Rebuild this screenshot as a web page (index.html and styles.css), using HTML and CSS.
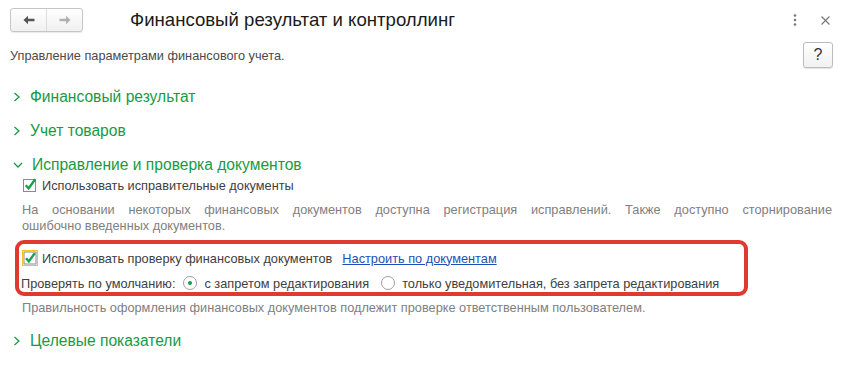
FILE: index.html
```html
<!DOCTYPE html>
<html lang="ru">
<head>
    <meta charset="UTF-8">
    <title>Финансовый результат и контроллинг</title>
    <link rel="stylesheet" href="styles.css">
</head>
<body>

    <div class="header">
        <div class="nav">
            <span class="nav-btn">
                <svg width="12" height="10" viewBox="0 0 12 10"><path d="M0.5 5 L5 0.8 L5 3.8 L11.5 3.8 L11.5 6.2 L5 6.2 L5 9.2 Z" fill="#555"/></svg>
            </span>
            <span class="nav-btn">
                <svg width="12" height="10" viewBox="0 0 12 10"><path d="M11.5 5 L7 0.8 L7 3.8 L0.5 3.8 L0.5 6.2 L7 6.2 L7 9.2 Z" fill="#b0b0b0"/></svg>
            </span>
        </div>
        <div class="title">Финансовый результат и контроллинг</div>
        <div class="header-tools">
            <svg class="tool-more" width="4" height="12" viewBox="0 0 4 12"><circle cx="2" cy="1.5" r="1.3" fill="#777"/><circle cx="2" cy="6" r="1.3" fill="#777"/><circle cx="2" cy="10.5" r="1.3" fill="#777"/></svg>
            <svg class="tool-close" width="9" height="9" viewBox="0 0 9 9"><path d="M0.5 0.5 L8.5 8.5 M8.5 0.5 L0.5 8.5" stroke="#777" stroke-width="1.1"/></svg>
        </div>
    </div>

    <div class="subhead">
        <span class="subtitle">Управление параметрами финансового учета.</span>
        <span class="help-btn">?</span>
    </div>

    <div class="group">
        <div class="group-head">
            <svg class="chevron" width="8" height="10" viewBox="0 0 8 10"><path d="M1.5 1 L6 5 L1.5 9" fill="none" stroke="#169b45" stroke-width="1.3"/></svg>
            Финансовый результат
        </div>
    </div>

    <div class="group">
        <div class="group-head">
            <svg class="chevron" width="8" height="10" viewBox="0 0 8 10"><path d="M1.5 1 L6 5 L1.5 9" fill="none" stroke="#169b45" stroke-width="1.3"/></svg>
            Учет товаров
        </div>
    </div>

    <div class="group">
        <div class="group-head">
            <svg class="chevron" width="10" height="10" viewBox="0 0 10 10"><path d="M1 3 L5 7 L9 3" fill="none" stroke="#169b45" stroke-width="1.3"/></svg>
            Исправление и проверка документов
        </div>
        <div class="group-body">
            <div class="row">
                <svg class="check" width="16" height="16" viewBox="0 0 16 16"><rect x="1.5" y="2.5" width="12" height="12" fill="#fff" stroke="#8a8a8a"/><path d="M3.8 8.3 L6.6 11.4 L13.2 2.2" fill="none" stroke="#19a04b" stroke-width="2.4"/></svg>
                <span class="label">Использовать исправительные документы</span>
            </div>
            <p class="note">
                <span class="note-line">На основании некоторых финансовых документов доступна регистрация исправлений. Также доступно сторнирование</span>
                ошибочно введенных документов.
            </p>

            <div class="highlight">
                <div class="row">
                    <svg class="check focused" width="16" height="16" viewBox="0 0 16 16"><rect x="0.5" y="0.5" width="15" height="15" fill="none" stroke="#f2c61f"/><rect x="2" y="2" width="12" height="12" fill="#fff" stroke="#8a8a8a"/><path d="M4 8.3 L6.8 11.4 L12.8 3.2" fill="none" stroke="#19a04b" stroke-width="2.4"/></svg>
                    <span class="label">Использовать проверку финансовых документов</span>
                    <a class="link" href="#">Настроить по документам</a>
                </div>
                <div class="row radio-row">
                    <span class="label">Проверять по умолчанию:</span>
                    <span class="radio checked"></span>
                    <span class="label option">с запретом редактирования</span>
                    <span class="radio"></span>
                    <span class="label option">только уведомительная, без запрета редактирования</span>
                </div>
            </div>

            <p class="note">Правильность оформления финансовых документов подлежит проверке ответственным пользователем.</p>
        </div>
    </div>

    <div class="group">
        <div class="group-head">
            <svg class="chevron" width="8" height="10" viewBox="0 0 8 10"><path d="M1.5 1 L6 5 L1.5 9" fill="none" stroke="#169b45" stroke-width="1.3"/></svg>
            Целевые показатели
        </div>
    </div>

</body>
</html>
```

FILE: styles.css
```css
body {
    margin: 0;
    font-family: "Liberation Sans", Arial, sans-serif;
    font-size: 12.75px;
    color: #404040;
    background: #fff;
}
.header {
    display: flex;
    align-items: center;
    height: 40px;
    padding-left: 10px;
}
.nav {
    display: flex;
    width: 73px;
    height: 24px;
    box-sizing: border-box;
    border: 1px solid #c6c6c6;
    border-radius: 3px;
    background: linear-gradient(#ffffff, #f0f0f0);
    box-shadow: 0 1px 1px rgba(0, 0, 0, 0.08);
}
.nav-btn {
    flex: 1;
    display: flex;
    align-items: center;
    justify-content: center;
}
.nav-btn + .nav-btn {
    border-left: 1px solid #dcdcdc;
}
.title {
    margin-left: 47px;
    font-size: 18.6px;
    color: #1a1a1a;
}
.header-tools {
    margin-left: auto;
    display: flex;
    align-items: center;
    padding-right: 20px;
}
.tool-close {
    margin-left: 24px;
}
.subhead {
    display: flex;
    align-items: center;
    justify-content: space-between;
    height: 30px;
    margin-bottom: 15px;
    padding: 0 17px 0 10px;
}
.subtitle {
    color: #4a4a4a;
}
.help-btn {
    width: 30px;
    height: 26px;
    box-sizing: border-box;
    border: 1px solid #bdbdbd;
    border-radius: 3px;
    background: linear-gradient(#ffffff, #f1f1f1);
    box-shadow: 0 1px 1px rgba(0, 0, 0, 0.12);
    display: flex;
    align-items: center;
    justify-content: center;
    font-size: 16px;
    color: #333;
}
.group-head {
    display: flex;
    align-items: center;
    height: 24px;
    margin-top: 10px;
    padding-left: 13px;
    font-size: 15.6px;
    color: #169b45;
}
.group-head .chevron {
    margin-right: 9px;
}
.group-body {
    padding-left: 22px;
    margin-top: -1px;
}
.row {
    display: flex;
    align-items: center;
    height: 18px;
    white-space: nowrap;
}
.check {
    margin-right: 4px;
    flex: none;
}
.note {
    margin: 8px 0 0;
    line-height: 16px;
    color: #808080;
    padding-right: 10px;
}
.note-line {
    display: block;
    width: 810px;
    text-align: justify;
    text-align-last: justify;
}
.highlight {
    width: 733px;
    box-sizing: border-box;
    margin: 6px 0 0 -7px;
    padding: 5px 0 0 3px;
    height: 56px;
    border: 4px solid #e0392f;
    border-radius: 9px;
}
.link {
    margin-left: 10px;
    color: #1f4fb5;
}
.radio-row {
    margin-top: 7px;
    margin-left: -1px;
}
.radio {
    width: 14px;
    height: 14px;
    box-sizing: border-box;
    border: 1px solid #a0a0a0;
    border-radius: 50%;
    background: #fff;
    margin: 0 7px 0 8px;
    position: relative;
    flex: none;
}
.option {
    margin-right: 4px;
}
.radio.checked::after {
    content: "";
    position: absolute;
    left: 4px;
    top: 4px;
    width: 4px;
    height: 4px;
    border-radius: 50%;
    background: #129d4a;
}
.highlight + .note {
    margin-top: 4px;
}
.group-body + .group,
.group:last-child .group-head {
    margin-top: 13px;
}
```
